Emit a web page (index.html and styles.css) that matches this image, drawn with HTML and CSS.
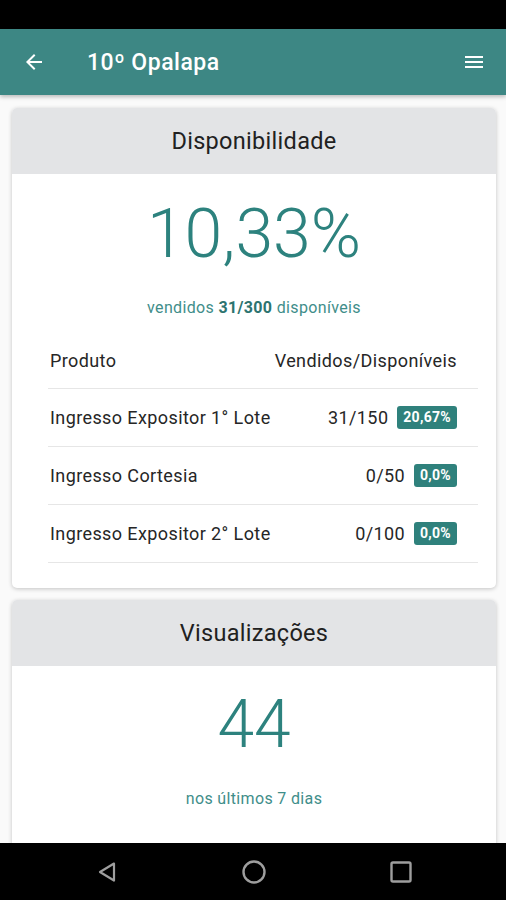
FILE: index.html
```html
<!DOCTYPE html>
<html lang="pt-BR">
<head>
    <meta charset="UTF-8" />
    <meta name="viewport" content="width=device-width, initial-scale=1.0" />
    <title>10º Opalapa</title>
    <link rel="stylesheet" href="styles.css">
</head>
<body>
    <!-- Status bar -->
    <div class="status-bar"></div>

    <!-- App bar -->
    <div class="app-bar">
        <div class="app-bar-left">
            <svg class="icon" width="24" height="24" viewBox="0 0 24 24">
                <path d="M20 11H7.83l5.59-5.59L12 4l-8 8 8 8 1.41-1.41L7.83 13H20v-2z" fill="#fff"/>
            </svg>
            <span class="app-title">10º Opalapa</span>
        </div>
        <svg class="icon" width="24" height="24" viewBox="0 0 24 24">
            <path d="M3 18h18v-2H3v2zm0-5h18v-2H3v2zm0-7v2h18V6H3z" fill="#fff"/>
        </svg>
    </div>

    <!-- Main Content -->
    <div class="container">
        <div class="card">
            <div class="card-header">Disponibilidade</div>
            <div class="card-body">
                <div class="big-number">10,33%</div>
                <p class="caption">vendidos <strong>31/300</strong> disponíveis</p>
                <table class="product-table">
                    <thead>
                        <tr>
                            <th>Produto</th>
                            <th class="right">Vendidos/Disponíveis</th>
                        </tr>
                    </thead>
                    <tbody>
                        <tr>
                            <td>Ingresso Expositor 1° Lote</td>
                            <td class="right">31/150 <span class="badge">20,67%</span></td>
                        </tr>
                        <tr>
                            <td>Ingresso Cortesia</td>
                            <td class="right">0/50 <span class="badge">0,0%</span></td>
                        </tr>
                        <tr>
                            <td>Ingresso Expositor 2° Lote</td>
                            <td class="right">0/100 <span class="badge">0,0%</span></td>
                        </tr>
                    </tbody>
                </table>
            </div>
        </div>

        <div class="card">
            <div class="card-header">Visualizações</div>
            <div class="card-body">
                <div class="big-number small">44</div>
                <p class="caption">nos últimos 7 dias</p>
            </div>
        </div>
    </div>

    <!-- Navigation bar -->
    <div class="nav-bar">
        <svg width="24" height="24" viewBox="0 0 24 24">
            <path d="M19 3.5L5 12l14 8.5z" fill="none" stroke="#9e9e9e" stroke-width="2.2" stroke-linejoin="round"/>
        </svg>
        <svg width="26" height="26" viewBox="0 0 26 26">
            <circle cx="13" cy="13" r="10.5" fill="none" stroke="#9e9e9e" stroke-width="2.4"/>
        </svg>
        <svg width="24" height="24" viewBox="0 0 24 24">
            <rect x="2.5" y="2.5" width="19" height="19" rx="1.5" fill="none" stroke="#9e9e9e" stroke-width="2.4"/>
        </svg>
    </div>
</body>
</html>
```

FILE: styles.css
```css
body {
    font-family: Roboto, "Liberation Sans", sans-serif;
    background-color: #fafafa;
    margin: 0;
    padding: 0;
    height: 900px;
    overflow: hidden;
}
.status-bar {
    height: 29px;
    background-color: #000;
}
/* App bar */
.app-bar {
    height: 66px;
    background-color: #3d8784;
    display: flex;
    justify-content: space-between;
    align-items: center;
    padding: 0 20px 0 22px;
    box-shadow: 0 2px 4px rgba(0, 0, 0, 0.25);
    position: relative;
}
.app-bar-left {
    display: flex;
    align-items: center;
    gap: 41px;
}
.icon {
    display: block;
}
.app-title {
    color: #fff;
    font-size: 23px;
    font-weight: 500;
    letter-spacing: 0.5px;
}
/* End */
.container {
    padding: 13px 10px 0 12px;
    display: flex;
    flex-direction: column;
    gap: 12px;
}
.card {
    background-color: #fff;
    border-radius: 5px;
    box-shadow: 0 1px 4px rgba(0, 0, 0, 0.22);
    overflow: hidden;
}
.card-header {
    background-color: #e3e4e6;
    height: 66px;
    line-height: 66px;
    text-align: center;
    font-size: 23.5px;
    letter-spacing: 0.3px;
    color: #212121;
}
.card-body {
    padding: 20px 18px 25px 36px;
}
.big-number {
    color: #2d827e;
    font-size: 68px;
    font-weight: 300;
    text-align: center;
    line-height: 80px;
    margin-left: -18px;
}
.big-number.small {
    font-size: 66px;
    margin-top: -1px;
}
.caption {
    color: #3f8e8a;
    font-size: 16px;
    letter-spacing: 0.35px;
    line-height: 19px;
    text-align: center;
    margin: 24px 0 23px -18px;
}
.caption strong {
    color: #2d7470;
}
.product-table {
    width: 100%;
    border-collapse: collapse;
    font-size: 18px;
    letter-spacing: 0.4px;
    color: #262626;
    white-space: nowrap;
}
.product-table th {
    font-weight: 400;
    text-align: left;
    height: 40px;
    padding: 0 0 8px 2px;
    border-bottom: 1px solid #e6e6e6;
}
.product-table td {
    height: 57px;
    padding: 0 0 0 2px;
    border-bottom: 1px solid #e6e6e6;
}
.product-table .right {
    text-align: right;
    padding-right: 21px;
}
.badge {
    display: inline-block;
    background-color: #2f817c;
    color: #fff;
    font-size: 14px;
    font-weight: 700;
    letter-spacing: 0.3px;
    line-height: 15px;
    padding: 4px 6px;
    border-radius: 3px;
    margin-left: 4px;
    vertical-align: 2px;
}
/* Navigation bar */
.nav-bar {
    position: fixed;
    left: 0;
    right: 0;
    bottom: 0;
    height: 57px;
    background-color: #000;
    display: flex;
    justify-content: space-between;
    align-items: center;
    padding: 0 93px 0 95px;
}
```
